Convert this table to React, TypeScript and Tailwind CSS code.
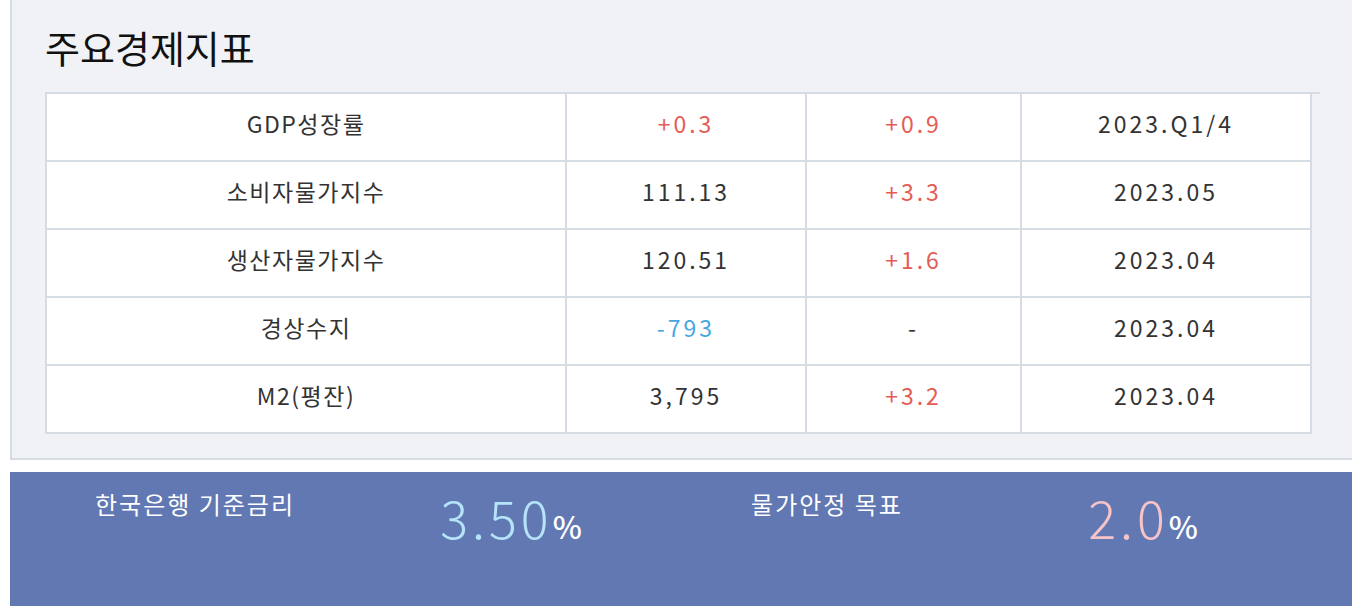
import { FC } from "react";

type Tone = "up" | "down" | "plain";

type Indicator = {
  name: string;
  value: string;
  valueTone: Tone;
  change: string;
  changeTone: Tone;
  date: string;
};

const indicators: Indicator[] = [
  { name: "GDP성장률", value: "+0.3", valueTone: "up", change: "+0.9", changeTone: "up", date: "2023.Q1/4" },
  { name: "소비자물가지수", value: "111.13", valueTone: "plain", change: "+3.3", changeTone: "up", date: "2023.05" },
  { name: "생산자물가지수", value: "120.51", valueTone: "plain", change: "+1.6", changeTone: "up", date: "2023.04" },
  { name: "경상수지", value: "-793", valueTone: "down", change: "-", changeTone: "plain", date: "2023.04" },
  { name: "M2(평잔)", value: "3,795", valueTone: "plain", change: "+3.2", changeTone: "up", date: "2023.04" },
];

const toneClass: Record<Tone, string> = {
  up: "text-[#e35d55]",
  down: "text-[#47a7df]",
  plain: "text-[#333333]",
};

const IndicatorRow: FC<Indicator> = ({ name, value, valueTone, change, changeTone, date }) => {
  return (
    <div className="flex h-[68px] border-b-2 border-[#d6dce4] text-[23px]">
      <div className="flex w-[520px] items-center justify-center border-r-2 border-[#d6dce4] pb-[7px] tracking-[1.5px] text-[#333333]">
        {name}
      </div>
      <div className={`flex w-[240px] items-center justify-center border-r-2 border-[#d6dce4] pb-[7px] tracking-[3px] ${toneClass[valueTone]}`}>
        {value}
      </div>
      <div className={`flex w-[215px] items-center justify-center border-r-2 border-[#d6dce4] pb-[7px] tracking-[3px] ${toneClass[changeTone]}`}>
        {change}
      </div>
      <div className="flex w-[290px] items-center justify-center border-r-2 border-[#d6dce4] pb-[7px] tracking-[3px] text-[#333333]">
        {date}
      </div>
    </div>
  );
};

const RateBlock: FC<{ label: string; value: string; valueColor: string }> = ({ label, value, valueColor }) => {
  return (
    <div className="flex w-[632px]">
      <div className="w-[370px] pt-[14px] text-center text-[24px] tracking-[2px] text-white">
        {label}
      </div>
      <div className="flex w-[262px] items-baseline justify-center pt-[6px]">
        <span className={`text-[52px] font-light tracking-[4px] ${valueColor}`}>{value}</span>
        <span className="text-[31px] font-medium text-white">%</span>
      </div>
    </div>
  );
};

export default function App() {
  return (
    <div className="h-[614px] w-[1352px] overflow-hidden bg-white pl-[10px] font-['Noto_Sans_CJK_KR','Noto_Sans',sans-serif]">
      <section className="w-[1400px] border-b-2 border-l-2 border-[#d6dce4] bg-[#f0f2f6] pb-[24px] pl-[33px]">
        <h2 className="pt-[26px] text-[38px] leading-[42px] text-[#111111]">주요경제지표</h2>
        <div className="mt-[24px] w-[1275px] border-t-2 border-[#d6dce4]">
          <div className="w-[1267px] border-l-2 border-[#d6dce4] bg-white">
            {indicators.map((item) => (
              <IndicatorRow key={item.name} {...item} />
            ))}
          </div>
        </div>
      </section>
      <div className="mt-[12px] flex h-[134px] w-[1400px] bg-[#6278b3]">
        <RateBlock label="한국은행 기준금리" value="3.50" valueColor="text-[#b5e3f8]" />
        <RateBlock label="물가안정 목표" value="2.0" valueColor="text-[#f5c3c8]" />
      </div>
    </div>
  );
}
